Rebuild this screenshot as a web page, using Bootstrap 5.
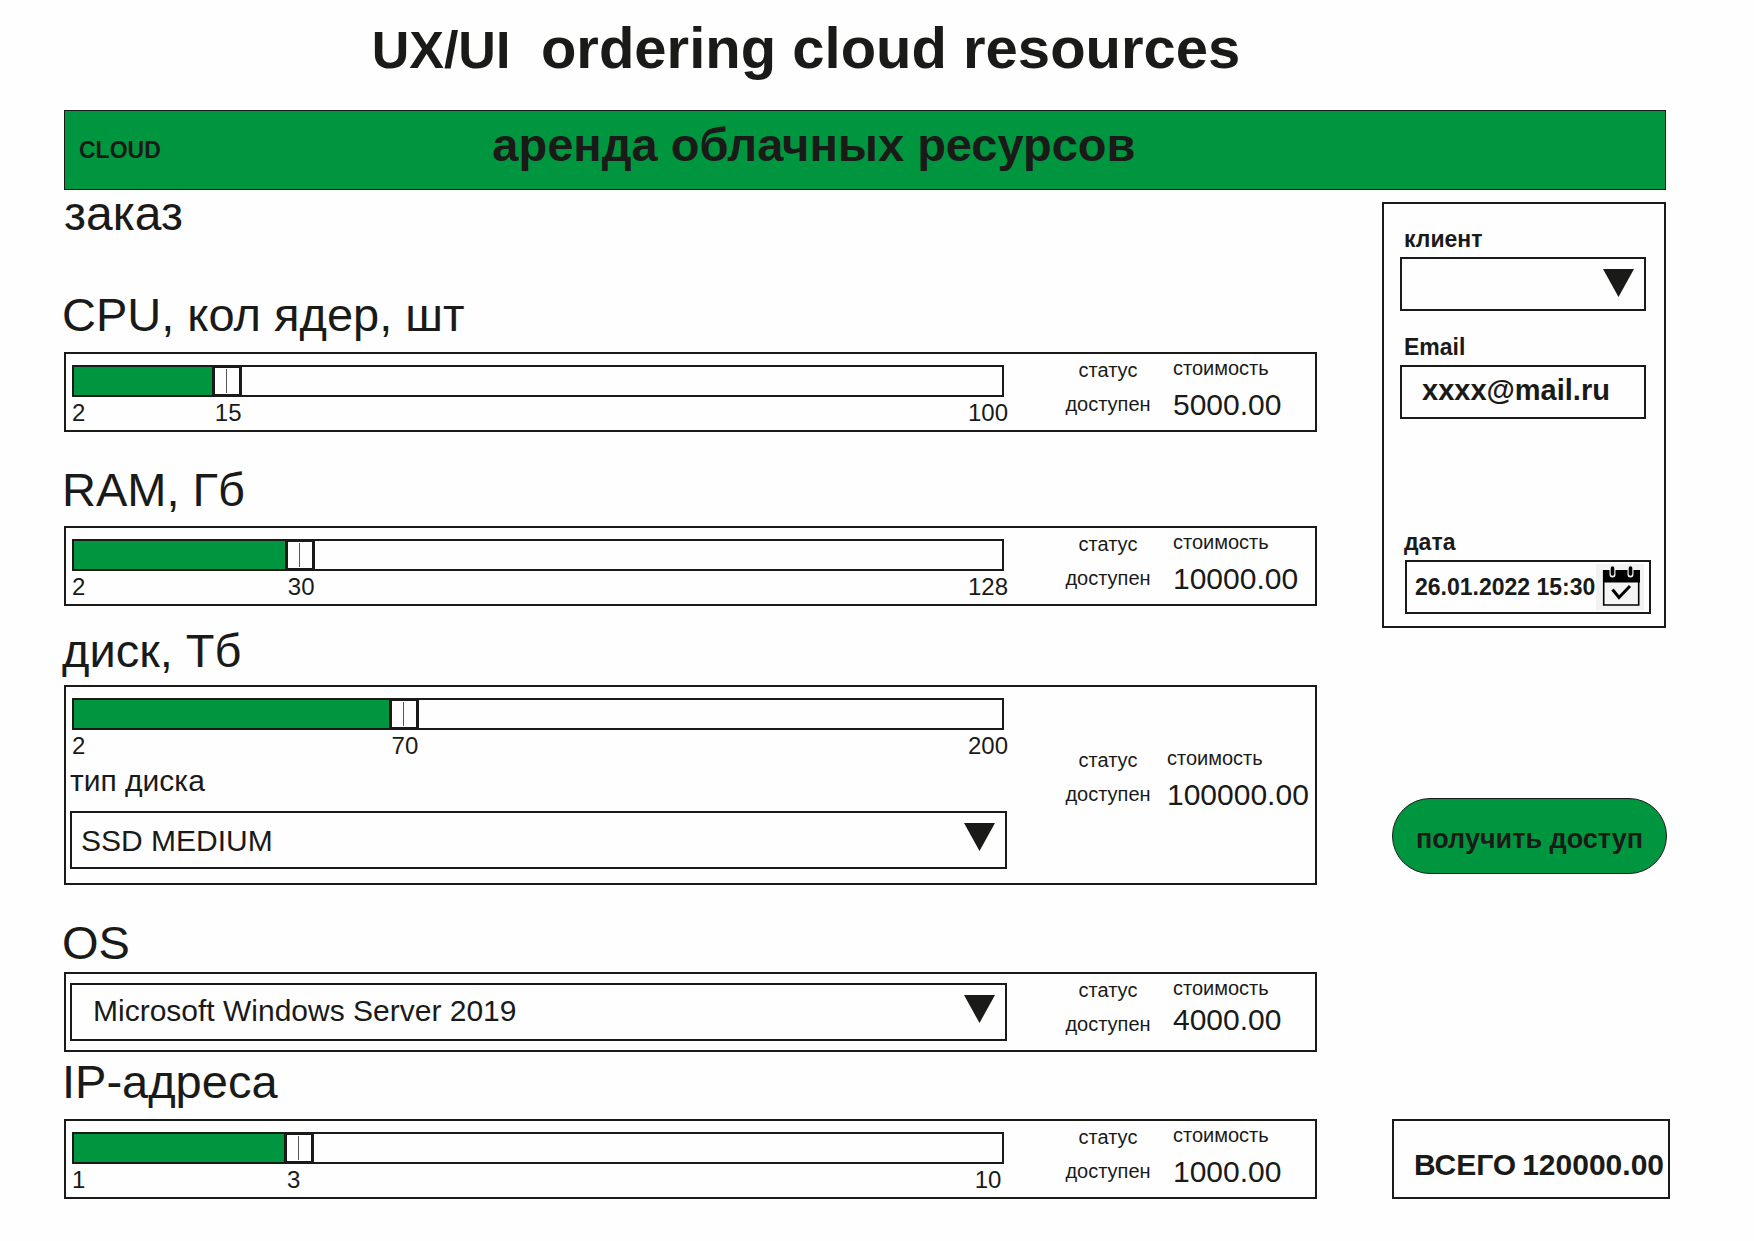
<!DOCTYPE html>
<html lang="ru">
<head>
<meta charset="utf-8">
<meta name="viewport" content="width=device-width, initial-scale=1">
<title>Аренда облачных ресурсов</title>
<link href="https://cdn.jsdelivr.net/npm/bootstrap@5.3.0/dist/css/bootstrap.min.css" rel="stylesheet">
<style>
  :root { --ink: #1a1a18; --brand: #00963f; }
  body { font-family: "Liberation Sans", Arial, sans-serif; color: var(--ink); background: #fefefe; }
  .page { padding: 16px 84px 40px 62px; }
  .page-title { font-size: 58px; line-height: 64px; font-weight: 700; padding-right: 120px; margin-bottom: 30px; }
  .title-prefix { font-size: 52px; line-height: 52px; }
  .banner { background: var(--brand); border: 1px solid var(--ink); height: 80px; margin: 0 4px 0 2px; padding-left: 14px; }
  .brand { font-size: 23px; line-height: 28px; font-weight: 700; color: var(--ink); text-decoration: none; }
  .banner-title { font-size: 47px; line-height: 48px; font-weight: 700; padding: 0 198px 10px 0; margin: 0; }
  .columns { gap: 65px; }

  .order-title { font-size: 48px; line-height: 48px; font-weight: 400; margin: 0; padding-left: 2px; }
  .section-title { font-size: 47px; line-height: 48px; font-weight: 400; margin: 0; }
  .resource { padding-top: 34px; }
  .resource .section-title { margin-bottom: 12px; }
  .resource-first { padding-top: 53px; }
  .resource-near { padding-top: 21px; }
  .resource-tight { padding-top: 6px; }
  .resource .title-close { margin-bottom: 5px; }
  .resource .title-apart { margin-bottom: 13px; }
  .resource .title-near { margin-bottom: 10px; }

  .panel { border: 2px solid var(--ink); margin-left: 2px; padding: 0 0 1px 4px; gap: 58px; }
  .panel-select { padding-bottom: 9px; }
  .panel-select .controls { padding-top: 9px; }
  .panel-disk { padding-bottom: 14px; }
  .panel-disk .offer { padding-top: 58px; gap: 16px; }
  .controls { min-width: 0; }
  .slider { padding: 11px 3px 0 2px; }
  .slider input {
    -webkit-appearance: none; appearance: none; display: block; width: 100%; height: 32px; margin: 0;
    border: 2px solid var(--ink);
    background: linear-gradient(var(--brand), var(--brand)) 0 0 / calc(var(--at) * 100%) 100% no-repeat;
  }
  .slider input::-webkit-slider-runnable-track { height: 32px; margin: 0 -2px; background: none; }
  .slider input::-webkit-slider-thumb {
    -webkit-appearance: none; width: 30px; height: 32px; border: 3px solid var(--ink); border-radius: 0;
    background: linear-gradient(#555, #555) center / 1px 24px no-repeat #fefefe;
  }
  .scale { font-size: 24px; line-height: 24px; margin: 4px -4px 0 0; }
  .scale-min { flex: 0 0 calc((100% - 34px) * var(--at) + 3px); }
  .scale-max { width: 40px; margin-left: auto; text-align: center; }
  .type-label { font-size: 30px; line-height: 36px; margin: 5px 0 12px; display: block; }

  .pick {
    -webkit-appearance: none; appearance: none; display: block; width: 100%; border: 2px solid var(--ink); border-radius: 0;
    color: var(--ink); font-size: 30px; height: 58px; padding: 0 50px 0 9px;
    background: #fefefe url("data:image/svg+xml,%3Csvg xmlns='http://www.w3.org/2000/svg' width='31' height='28'%3E%3Cpath d='M0 0h31L15.5 28z' fill='%231a1a18'/%3E%3C/svg%3E") right 10px top 10px no-repeat;
  }
  .pick-indent { padding: 0 50px 4px 21px; }
  .offer { flex: 0 0 250px; gap: 22px; font-size: 20px; padding-top: 1px; }
  .offer-status { width: 86px; text-align: center; line-height: 30px; gap: 4px; }
  .offer-cost { line-height: 26px; }
  .price { font-size: 30px; line-height: 48px; }
  .panel-select .price { line-height: 38px; }

  .side { flex: 0 0 288px; min-width: 0; }
  .client { border: 2px solid var(--ink); margin: 12px 4px 0 0; padding: 21px 13px 12px 16px; }
  .client label { font-size: 23px; line-height: 28px; font-weight: 700; display: block; padding-left: 4px; margin-bottom: 4px; }
  .field { margin: 0 5px 22px 0; }
  .client .pick, .client .mail, .date-box { height: 54px; }
  .mail { width: 100%; border: 2px solid var(--ink); padding: 0 10px 4px 20px; font-size: 29px; font-weight: 700; color: var(--ink); background: none; }
  .date-field { margin-top: 109px; }
  .date-box { border: 2px solid var(--ink); margin-left: 5px; padding: 0 5px 0 8px; }
  .date-box input { flex: 1 1 0; min-width: 0; border: 0; padding: 0; background: none; font-size: 23px; font-weight: 700; color: var(--ink); }
  .date-box button { border: 0; padding: 0; background: #f2f2f2; line-height: 0; }
  .get-access {
    background: var(--brand); border: 1px solid var(--ink); border-radius: 38px; height: 76px; color: var(--ink);
    font-size: 27px; font-weight: 700; margin: 170px 3px 0 10px; padding: 6px 0 0; white-space: nowrap;
  }
  .total { border: 2px solid var(--ink); height: 80px; margin-left: 10px; padding: 21px 4px 0 20px; font-size: 30px; font-weight: 700; }
</style>
</head>
<body>
<div class="page">
  <h1 class="page-title text-center"><span class="title-prefix">UX/UI&nbsp;</span> ordering cloud resources</h1>

  <header class="banner d-flex align-items-center">
    <a class="brand" href="#">CLOUD</a>
    <p class="banner-title flex-grow-1 text-center">аренда облачных ресурсов</p>
  </header>

  <form class="columns d-flex">
    <main class="flex-grow-1">
      <h2 class="order-title">заказ</h2>

      <section class="resource resource-first">
        <h3 class="section-title title-apart"><label for="cpu">CPU, кол ядер, шт</label></h3>
        <div class="panel d-flex">
          <div class="controls flex-grow-1">
            <div class="slider" style="--at: .155">
              <input type="range" id="cpu" min="0" max="1000" value="155" aria-valuetext="15">
              <div class="scale d-flex"><span class="scale-min">2</span><output for="cpu">15</output><span class="scale-max">100</span></div>
            </div>
          </div>
          <div class="offer d-flex">
            <div class="offer-status d-flex flex-column"><span>статус</span><span>доступен</span></div>
            <div class="offer-cost d-flex flex-column"><span>стоимость</span><span class="price">5000.00</span></div>
          </div>
        </div>
      </section>

      <section class="resource">
        <h3 class="section-title"><label for="ram">RAM, Гб</label></h3>
        <div class="panel d-flex">
          <div class="controls flex-grow-1">
            <div class="slider" style="--at: .236">
              <input type="range" id="ram" min="0" max="1000" value="236" aria-valuetext="30">
              <div class="scale d-flex"><span class="scale-min">2</span><output for="ram">30</output><span class="scale-max">128</span></div>
            </div>
          </div>
          <div class="offer d-flex">
            <div class="offer-status d-flex flex-column"><span>статус</span><span>доступен</span></div>
            <div class="offer-cost d-flex flex-column"><span>стоимость</span><span class="price">10000.00</span></div>
          </div>
        </div>
      </section>

      <section class="resource resource-near">
        <h3 class="section-title title-near"><label for="disk">диск, Тб</label></h3>
        <div class="panel panel-disk d-flex">
          <div class="controls flex-grow-1">
            <div class="slider" style="--at: .351">
              <input type="range" id="disk" min="0" max="1000" value="351" aria-valuetext="70">
              <div class="scale d-flex"><span class="scale-min">2</span><output for="disk">70</output><span class="scale-max">200</span></div>
            </div>
            <label class="type-label" for="disk-type">тип диска</label>
            <select class="pick" id="disk-type"><option>SSD MEDIUM</option></select>
          </div>
          <div class="offer d-flex">
            <div class="offer-status d-flex flex-column"><span>статус</span><span>доступен</span></div>
            <div class="offer-cost d-flex flex-column"><span>стоимость</span><span class="price">100000.00</span></div>
          </div>
        </div>
      </section>

      <section class="resource">
        <h3 class="section-title title-close"><label for="os">OS</label></h3>
        <div class="panel panel-select d-flex">
          <div class="controls flex-grow-1">
            <select class="pick pick-indent" id="os"><option>Microsoft Windows Server 2019</option></select>
          </div>
          <div class="offer d-flex">
            <div class="offer-status d-flex flex-column"><span>статус</span><span>доступен</span></div>
            <div class="offer-cost d-flex flex-column"><span>стоимость</span><span class="price">4000.00</span></div>
          </div>
        </div>
      </section>

      <section class="resource resource-tight">
        <h3 class="section-title title-apart"><label for="ip">IP-адреса</label></h3>
        <div class="panel d-flex">
          <div class="controls flex-grow-1">
            <div class="slider" style="--at: .235">
              <input type="range" id="ip" min="0" max="1000" value="235" aria-valuetext="3">
              <div class="scale d-flex"><span class="scale-min">1</span><output for="ip">3</output><span class="scale-max">10</span></div>
            </div>
          </div>
          <div class="offer d-flex">
            <div class="offer-status d-flex flex-column"><span>статус</span><span>доступен</span></div>
            <div class="offer-cost d-flex flex-column"><span>стоимость</span><span class="price">1000.00</span></div>
          </div>
        </div>
      </section>
    </main>

    <aside class="side d-flex flex-column">
      <div class="client">
        <div class="field">
          <label for="client">клиент</label>
          <select class="pick" id="client"><option></option></select>
        </div>
        <div class="field">
          <label for="email">Email</label>
          <input class="mail" type="email" id="email" value="xxxx@mail.ru">
        </div>
        <div class="date-field">
          <label for="date">дата</label>
          <div class="date-box d-flex align-items-center">
            <input type="text" id="date" value="26.01.2022 15:30">
            <button type="button" aria-label="Выбрать дату">
              <svg width="48" height="46" viewBox="0 0 48 46">
                <path d="M7.7 7v34h35V7z" fill="#f4f4f4" stroke="#000" stroke-width="1.6"/>
                <path d="M7 6h37v12.500H7z"/>
                <path d="M16.500 4v6.500M34.500 4v6.500" stroke="#f2f2f2" stroke-width="6" stroke-linecap="round"/>
                <path d="M16.500 4v6M34.500 4v6" stroke="#000" stroke-width="3.600" stroke-linecap="round"/>
                <path d="M16.500 25.500l6.500 8L34 22" fill="none" stroke="#000" stroke-width="3"/>
              </svg>
            </button>
          </div>
        </div>
      </div>

      <button type="submit" class="get-access">получить доступ</button>

      <div class="total d-flex justify-content-between mt-auto"><span>ВСЕГО</span><span>120000.00</span></div>
    </aside>
  </form>
</div>
<script src="https://cdn.jsdelivr.net/npm/bootstrap@5.3.0/dist/js/bootstrap.bundle.min.js"></script>
</body>
</html>
